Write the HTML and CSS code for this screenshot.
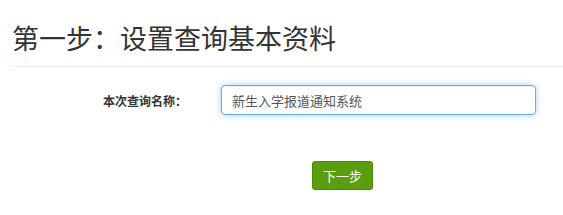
FILE: index.html
```html
<!DOCTYPE html>
<html lang="zh-CN">
  <head>
    <meta charset="UTF-8" />
    <meta name="viewport" content="width=device-width, initial-scale=1.0" />
    <title>设置查询基本资料</title>
    <link rel="stylesheet" href="styles.css">
  </head>
  <body>
    <div class="page">
      <h1 class="page-title">第一步：设置查询基本资料</h1>
      <form class="query-form">
        <div class="form-row">
          <label class="form-label" for="queryName">本次查询名称：</label>
          <input id="queryName" class="form-input" type="text" value="新生入学报道通知系统" />
        </div>
        <div class="form-actions">
          <button type="button" class="btn-next">下一步</button>
        </div>
      </form>
    </div>
  </body>
</html>
```

FILE: styles.css
```css
body,
html {
  margin: 0;
  padding: 0;
  background-color: #ffffff;
  color: #333333;
  font-family: "Liberation Sans", "Noto Sans CJK SC", sans-serif;
}
.page {
  padding-left: 11px;
}
.page-title {
  margin: 0;
  padding: 25px 0 10px 1px;
  font-size: 27px;
  font-weight: normal;
  line-height: 31px;
  color: #333333;
  border-bottom: 1px solid #eeeeee;
}
.query-form {
  padding-top: 18px;
}
.form-row {
  display: flex;
  align-items: center;
}
.form-label {
  width: 176px;
  padding-right: 34px;
  text-align: right;
  font-size: 12px;
  font-weight: bold;
  color: #333333;
}
.form-input {
  width: 315px;
  height: 30px;
  box-sizing: border-box;
  padding: 0 10px;
  font-family: "Liberation Sans", "Noto Sans CJK SC", sans-serif;
  font-size: 13px;
  color: #555555;
  border: 1px solid #66afe9;
  border-radius: 4px;
  outline: none;
  box-shadow: inset 0 1px 1px rgba(0, 0, 0, 0.075), 0 0 6px rgba(102, 175, 233, 0.6);
}
.form-actions {
  display: flex;
  padding-top: 46px;
  padding-left: 301px;
}
.btn-next {
  width: 61px;
  height: 29px;
  padding: 0;
  font-family: "Liberation Sans", "Noto Sans CJK SC", sans-serif;
  font-size: 13px;
  color: #ffffff;
  background-color: #5a9e0e;
  border: 1px solid #4a8a08;
  border-radius: 3px;
  cursor: pointer;
}
```
